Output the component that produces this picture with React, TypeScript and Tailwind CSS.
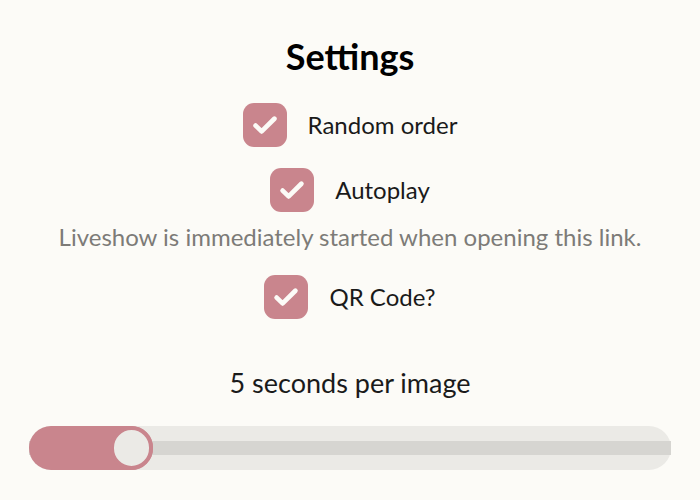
import { useState } from "react";

const font = { fontFamily: "Lato, 'Noto Sans', sans-serif" };

function Check({ label, checked, onToggle }: { label: string; checked: boolean; onToggle: () => void }) {
  return (
    <label className="flex items-center gap-[21px] cursor-pointer select-none">
      <span
        onClick={onToggle}
        className={`flex h-[44px] w-[44px] items-center justify-center rounded-[11px] ${checked ? "bg-[#c9858d]" : "bg-[#e6e4df]"}`}
      >
        {checked && (
          <svg width="30" height="30" viewBox="0 0 24 24" fill="none" stroke="#fcfbf7" strokeWidth="3.8" strokeLinecap="round" strokeLinejoin="round">
            <path d="M4.5 12.5l4.8 4.6L19.5 7" />
          </svg>
        )}
      </span>
      <span className="text-[24px] text-[#1a1a1a]">{label}</span>
    </label>
  );
}

export default function App() {
  const [random, setRandom] = useState(true);
  const [autoplay, setAutoplay] = useState(true);
  const [qr, setQr] = useState(true);
  const seconds = 5;
  const pct = 19.3;

  return (
    <div className="min-h-[500px] w-[700px] bg-[#fcfbf7] px-[29px] pt-[34px]" style={font}>
      <div className="flex flex-col items-center">
        <h1 className="text-[36px] font-bold leading-[44px] text-black">Settings</h1>

        <div className="mt-[25px] flex flex-col items-center gap-[21px]">
          <Check label="Random order" checked={random} onToggle={() => setRandom(!random)} />
          <Check label="Autoplay" checked={autoplay} onToggle={() => setAutoplay(!autoplay)} />
        </div>
        <p className="mt-[9px] text-[24px] leading-[32px] text-[#7d7b78]">
          Liveshow is immediately started when opening this link.
        </p>
        <div className="mt-[22px]">
          <Check label="QR Code?" checked={qr} onToggle={() => setQr(!qr)} />
        </div>

        <p className="mt-[48px] text-[27px] leading-[32px] text-[#1a1a1a]">{seconds} seconds per image</p>
      </div>

      <div className="relative mt-[27px] h-[44px] w-full rounded-full bg-[#ebeae6]">
        <div className="absolute left-0 right-0 top-[15px] h-[14px] bg-[#d6d5d1]" />
        <div className="absolute left-0 top-0 h-[44px] rounded-full bg-[#c9858d]" style={{ width: `${pct}%` }} />
        <div
          className="absolute top-0 h-[44px] w-[43px] rounded-full border-[4px] border-[#c9858d] bg-[#ebeae6]"
          style={{ left: `calc(${pct}% - 43px)` }}
        />
      </div>
    </div>
  );
}
